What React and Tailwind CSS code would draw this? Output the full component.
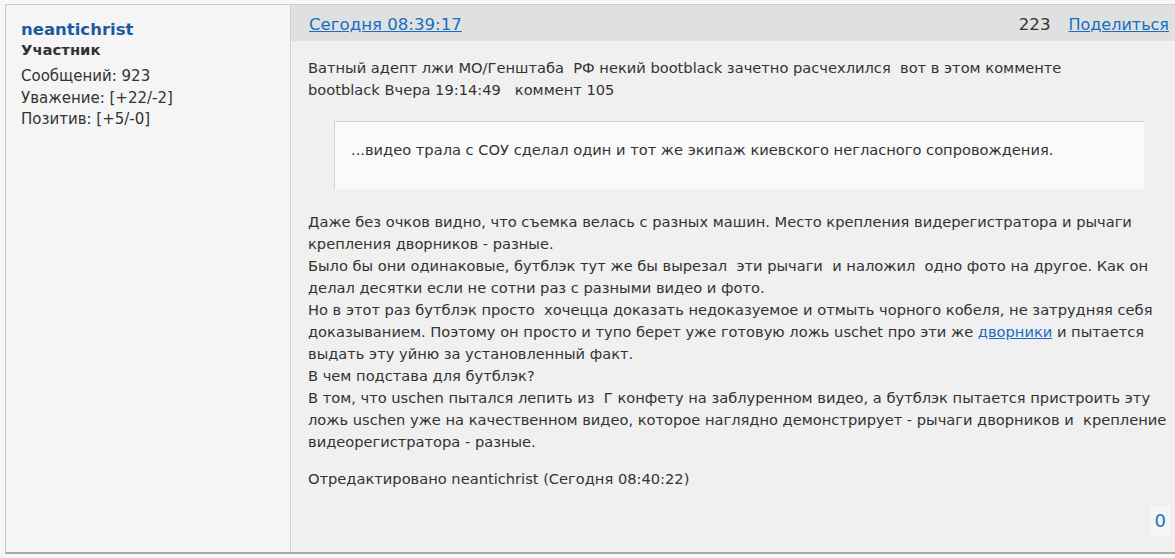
const stats = ["Сообщений: 923", "Уважение: [+22/-2]", "Позитив: [+5/-0]"];

function Author() {
  return (
    <div className="w-[285px] shrink-0 border-r border-[#d0d0d0] bg-[#f5f5f5] px-[15px] pt-[14px]">
      <div className="text-[16.5px] font-bold leading-[21px] text-[#1b5aa0]">neantichrist</div>
      <div className="text-[14.8px] font-bold leading-[20px] text-[#333]">Участник</div>
      <div className="mt-[6px] text-[15px] leading-[21.5px] text-[#333]">
        {stats.map((s) => (
          <div key={s}>{s}</div>
        ))}
      </div>
    </div>
  );
}

function Post() {
  return (
    <div className="flex min-w-0 flex-1 flex-col bg-[#f0f0f0]">
      <div className="flex h-[36px] shrink-0 items-center bg-[#dfe0e0] pl-[18px] pr-[6px] pt-[4px] text-[16.6px]">
        <a href="#" className="text-[#1a6ec0] underline">Сегодня 08:39:17</a>
        <span className="ml-auto text-[#333]">223</span>
        <a href="#" className="ml-[18px] text-[16px] text-[#1a6ec0] underline">Поделиться</a>
      </div>
      <div className="flex min-h-0 flex-1 flex-col whitespace-nowrap px-[17px] pt-[16px] text-[14.65px] leading-[22px] text-[#333]">
        <p>
          Ватный адепт лжи МО/Генштаба&nbsp; РФ некий bootblack зачетно расчехлился&nbsp; вот в этом комменте
          <br />
          bootblack Вчера 19:14:49&nbsp;&nbsp; коммент 105
        </p>
        <blockquote className="ml-[26px] mr-[14px] mt-[20px] h-[68px] shrink-0 border-l border-t border-[#d4d4d4] bg-[#fafafa] px-[16px] pt-[17px]">
          ...видео трала с СОУ сделал один и тот же экипаж киевского негласного сопровождения.
        </blockquote>
        <p className="mt-[22px]">
          Даже без очков видно, что съемка велась с разных машин. Место крепления видерегистратора и рычаги
          <br />
          крепления дворников - разные.
          <br />
          Было бы они одинаковые, бутблэк тут же бы вырезал&nbsp; эти рычаги&nbsp; и наложил&nbsp; одно фото на другое. Как он
          <br />
          делал десятки если не сотни раз с разными видео и фото.
          <br />
          Но в этот раз бутблэк просто&nbsp; хочецца доказать недоказуемое и отмыть чорного кобеля, не затрудняя себя
          <br />
          доказыванием. Поэтому он просто и тупо берет уже готовую ложь uschet про эти же{" "}
          <a href="#" className="text-[#1a6ec0] underline">дворники</a> и пытается
          <br />
          выдать эту уйню за установленный факт.
          <br />В чем подстава для бутблэк?
          <br />
          В том, что uschen пытался лепить из&nbsp; Г конфету на заблуренном видео, а бутблэк пытается пристроить эту
          <br />
          ложь uschen уже на качественном видео, которое наглядно демонстрирует - рычаги дворников и&nbsp; крепление
          <br />
          видеорегистратора - разные.
        </p>
        <p className="mt-[15px]">Отредактировано neantichrist (Сегодня 08:40:22)</p>
        <div className="mt-[16px] flex justify-end">
          <span className="-mr-[13px] bg-[#f5f5f5] px-[5px] text-[18px] leading-[30px] text-[#1a6ec0]">0</span>
        </div>
      </div>
    </div>
  );
}

export default function App() {
  return (
    <div className="h-[558px] w-[1175px] overflow-hidden bg-[#f7f7f7] font-['DejaVu_Sans',sans-serif]">
      <div className="ml-[5px] mt-[4px] flex h-[550px] w-[1170px] border-b-2 border-l border-t border-b-[#aaaaaa] border-l-[#c8c8c8] border-t-[#cccccc]">
        <Author />
        <Post />
      </div>
    </div>
  );
}
